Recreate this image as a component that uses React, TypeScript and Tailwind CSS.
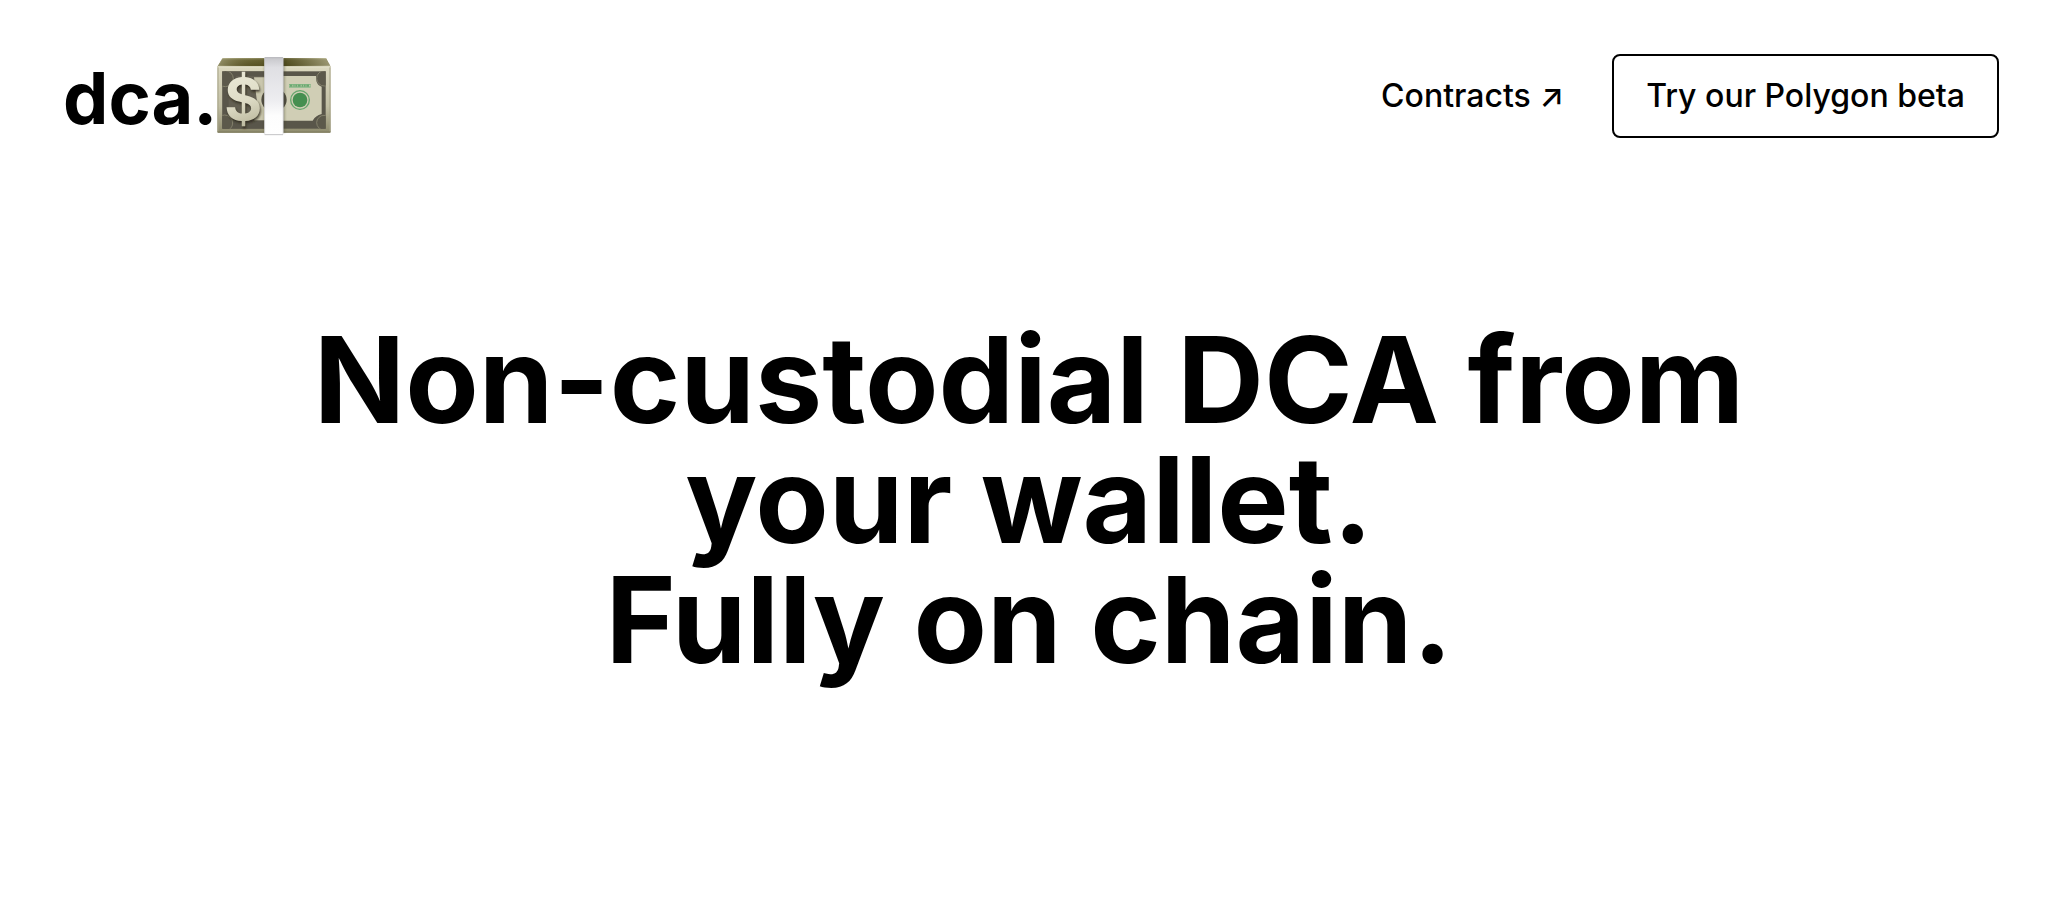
function MoneyStack() {
  return (
    <svg viewBox="21 18 342 240" className="h-20 w-[114px]" role="img" aria-label="Bundle of banknotes">
      <defs>
        <linearGradient id="stack" x1="0" y1="0" x2="0" y2="1">
          <stop offset="0" stopColor="#a9a67c" />
          <stop offset="0.3" stopColor="#77733f" />
          <stop offset="1" stopColor="#5c5727" />
        </linearGradient>
        <linearGradient id="edge" x1="0" y1="0" x2="1" y2="0">
          <stop offset="0" stopColor="#d9d7bc" stopOpacity="0.5" />
          <stop offset="0.3" stopColor="#4a4518" stopOpacity="0.2" />
          <stop offset="0.6" stopColor="#3c380f" stopOpacity="0.5" />
          <stop offset="1" stopColor="#dddac0" stopOpacity="0.6" />
        </linearGradient>
        <linearGradient id="paper" x1="0" y1="0" x2="0" y2="1">
          <stop offset="0" stopColor="#dcd9c0" />
          <stop offset="0.6" stopColor="#c2bfa4" />
          <stop offset="1" stopColor="#8e8b6d" />
        </linearGradient>
        <linearGradient id="dollar" x1="0" y1="0" x2="0.2" y2="1">
          <stop offset="0" stopColor="#eeeddc" />
          <stop offset="0.6" stopColor="#dedcc6" />
          <stop offset="1" stopColor="#b9b69b" />
        </linearGradient>
        <linearGradient id="band" x1="0" y1="0" x2="0" y2="1">
          <stop offset="0" stopColor="#c6c6ca" />
          <stop offset="0.13" stopColor="#dfdfe3" />
          <stop offset="0.55" stopColor="#ededf0" />
          <stop offset="0.75" stopColor="#fdfdfd" />
          <stop offset="1" stopColor="#ffffff" />
        </linearGradient>
        <filter id="soft" x="-20%" y="-20%" width="140%" height="140%">
          <feGaussianBlur stdDeviation="3" />
        </filter>
        <clipPath id="plate">
          <rect x="37" y="64" width="310" height="172" />
        </clipPath>
      </defs>

      <path d="M38 24H348L362 50H22Z" fill="url(#stack)" />
      <path d="M38 24H348L362 50H22Z" fill="url(#edge)" />
      <g stroke="#4b4720" strokeOpacity="0.7" strokeWidth="1.5">
        <path d="M35 30H351M32 36H354M28 42H358" />
      </g>
      <rect x="22" y="49" width="340" height="199" rx="3" fill="url(#paper)" />
      <path d="M23 51H361" stroke="#e4e2cc" strokeWidth="3" />
      <path d="M24 52V246M360 52V246" stroke="#a5a287" strokeWidth="3" />
      <path d="M23 246H361" stroke="#858264" strokeWidth="4" />
      <rect x="37" y="64" width="310" height="172" fill="#59564a" />
      <g clipPath="url(#plate)">
        <path d="M78 78H318C318 96 322 106 335 110V192C322 195 314 202 308 212H78C76 201 69 194 56 191V110C68 106 76 97 78 78Z" fill="#d0ceb5" />
        <path d="M37 64H165V236H37Z" fill="#59564a" fillOpacity="0.92" />
        <g fill="#5c594b" stroke="#8c8972" strokeWidth="2.5">
          <circle cx="343" cy="85" r="23" />
          <circle cx="342" cy="218" r="22" />
          <circle cx="46" cy="86" r="24" />
          <circle cx="44" cy="219" r="24" />
        </g>
      </g>
      <path d="M132 82H166V211H132C142 190 146 170 140 148Z" fill="#c9c6ad" />
      <ellipse cx="192" cy="149" rx="38" ry="35" fill="#504d43" />

      <path d="M237 102H302V106H237ZM237 109H302V113H237Z" fill="#86bb89" />
      <path d="M239 107H301" stroke="#6aa870" strokeWidth="7" strokeDasharray="8 3 4 2 6 2" />
      <circle cx="270" cy="150" r="28" fill="none" stroke="#65a66c" strokeWidth="4" />
      <circle cx="270" cy="150" r="22" fill="#458f50" />

      <g fontFamily="Inter, sans-serif" fontSize="174" fontWeight="700" textAnchor="middle">
        <text x="103" y="215" fill="#292719" fillOpacity="0.8" filter="url(#soft)" aria-hidden="true">$</text>
        <text x="100" y="211" fill="url(#dollar)">$</text>
      </g>

      <rect x="163" y="28" width="61" height="220" fill="#2f2d24" fillOpacity="0.4" filter="url(#soft)" />
      <rect x="163" y="22" width="57" height="233" rx="3" fill="url(#band)" />
      <path d="M164 23H219" stroke="#aaaab0" strokeWidth="2" />
      <path d="M164 254H219" stroke="#c3c3c5" strokeWidth="3" />
      <path d="M164 24V253M219 24V253" stroke="#cfcfd3" strokeWidth="1.5" />
    </svg>
  );
}

export default function App() {
  return (
    <div className="bg-white font-['Inter',sans-serif] text-black">
      <header className="flex items-center justify-between py-[54px] pr-[59px] pl-[63px]">
        <a href="#" className="flex items-center text-[72px] leading-[80px] font-bold">
          <span className="pt-1">dca.</span>
          <MoneyStack />
        </a>
        <nav className="flex items-center gap-12 text-[32px] leading-[48px] font-medium">
          <a href="#contracts">Contracts ↗</a>
          <button type="button" className="rounded-lg border-2 border-black px-8 py-4">
            Try our Polygon beta
          </button>
        </nav>
      </header>
      <main className="px-16 pt-32 pb-32">
        <h1 className="mx-auto max-w-[1536px] text-center text-[120px] leading-[120px] font-bold">
          Non-custodial DCA from your wallet.
          <span className="block">Fully on chain.</span>
        </h1>
      </main>
    </div>
  );
}
